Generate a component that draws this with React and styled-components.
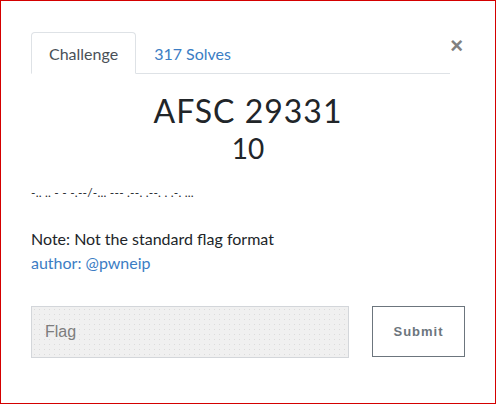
import React from "react";
import styled, { createGlobalStyle } from "styled-components";

const GlobalStyle = createGlobalStyle`
  html, body {
    margin: 0;
    padding: 0;
    background: #fff;
  }
  * {
    box-sizing: border-box;
  }
`;

const Frame = styled.div`
  width: 496px;
  height: 404px;
  border: 1px solid #d40000;
  background: #fff;
  padding: 31px 30px 0 30px;
  font-family: Lato, "Liberation Sans", sans-serif;
  color: #212529;
`;

const Header = styled.div`
  display: flex;
  align-items: flex-start;
`;

const TabList = styled.div`
  display: flex;
  width: 420px;
  border-bottom: 1px solid #dee2e6;
`;

const Tab = styled.div`
  padding: 0 17px;
  height: 42px;
  line-height: 42px;
  font-size: 16px;
  margin-bottom: -1px;
  border: 1px solid ${(p) => (p.active ? "#dee2e6" : "transparent")};
  border-bottom-color: ${(p) => (p.active ? "#fff" : "transparent")};
  border-radius: 4px 4px 0 0;
  background: ${(p) => (p.active ? "#fff" : "transparent")};
  color: ${(p) => (p.active ? "#495057" : "#3b7dc4")};
`;

const Close = styled.div`
  flex: 1;
  text-align: right;
  padding-right: 2px;
  margin-top: 2px;
  font-family: "Liberation Sans", Arial, sans-serif;
  font-size: 22px;
  font-weight: 700;
  line-height: 24px;
  color: #808080;
`;

const Body = styled.div`
  padding-top: 18px;
`;

const Title = styled.h2`
  margin: 0;
  text-align: center;
  font-weight: 400;
  font-size: 32px;
  line-height: 38px;
  letter-spacing: 1px;
  color: #212529;
`;

const Value = styled.h3`
  margin: 0;
  text-align: center;
  font-weight: 400;
  font-size: 28px;
  line-height: 36px;
  color: #212529;
`;

const Morse = styled.p`
  margin: 18px 0 0 0;
  font-size: 12px;
  line-height: 18px;
  letter-spacing: 0.2px;
`;

const Note = styled.p`
  margin: 25px 0 0 0;
  font-size: 16px;
  line-height: 24px;
`;

const Author = styled.a`
  display: block;
  font-size: 16px;
  line-height: 24px;
  color: #3b7dc4;
  text-decoration: none;
`;

const Form = styled.div`
  display: flex;
  gap: 23px;
  margin-top: 31px;
`;

const FlagInput = styled.input`
  width: 318px;
  height: 52px;
  border: 1px solid #d3d6da;
  background-color: #f0f0f0;
  background-image: radial-gradient(#dcdcdc 0.8px, transparent 0.9px);
  background-size: 5px 5px;
  padding: 0 13px;
  font-family: "Liberation Sans", Arial, sans-serif;
  font-size: 16px;
  color: #495057;
  outline: none;
  &::placeholder {
    color: #7d7d7d;
  }
`;

const SubmitButton = styled.button`
  width: 93px;
  height: 51px;
  border: 1px solid #6c757d;
  background: #fff;
  color: #6c757d;
  font-family: "Liberation Sans", Arial, sans-serif;
  font-weight: 700;
  font-size: 13px;
  letter-spacing: 1px;
  padding: 0;
  cursor: pointer;
`;

export default function App() {
  return (
    <>
      <GlobalStyle />
      <Frame>
        <Header>
          <TabList>
            <Tab active>Challenge</Tab>
            <Tab>317 Solves</Tab>
          </TabList>
          <Close>×</Close>
        </Header>
        <Body>
          <Title>AFSC 29331</Title>
          <Value>10</Value>
          <Morse>-.. .. - - -.--/-... --- .--. .--. . .-. ...</Morse>
          <Note>Note: Not the standard flag format</Note>
          <Author href="#">author: @pwneip</Author>
          <Form>
            <FlagInput placeholder="Flag" />
            <SubmitButton>Submit</SubmitButton>
          </Form>
        </Body>
      </Frame>
    </>
  );
}
